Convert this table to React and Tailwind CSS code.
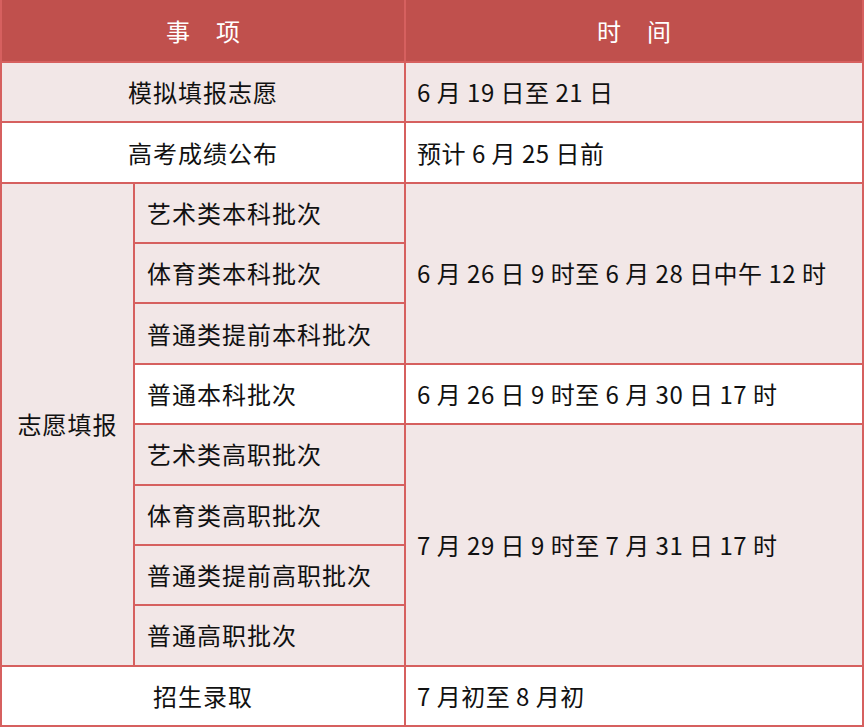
import React from "react";

const font = { fontFamily: '"Noto Sans CJK SC", "Noto Sans", sans-serif' };

function Cell({ className = "", children }) {
  return (
    <div className={"flex items-center text-[24px] leading-none tracking-[1px] text-[#111111] " + className}>
      {children}
    </div>
  );
}

function DateCell({ className = "", children }) {
  return (
    <div className={"flex items-center pl-[11px] text-[24px] leading-none tracking-[0.5px] text-[#111111] " + className}>
      {children}
    </div>
  );
}

export default function App() {
  const pink = "bg-[#f2e7e7]";
  const white = "bg-white";
  return (
    <div className="w-[864px] h-[727px] bg-white" style={font}>
      <div className="grid h-[727px] w-[864px] grid-cols-[131px_269px_1fr] grid-rows-[61px_repeat(11,minmax(0,1fr))] gap-[2px] bg-[#d6605f] px-[2px] pb-[2px]">
        {/* header */}
        <div className="col-span-2 flex items-center justify-center gap-[26px] bg-[#c0504d] text-[24px] leading-none text-white">
          <span>事</span>
          <span>项</span>
        </div>
        <div className="flex items-center justify-center gap-[26px] bg-[#c0504d] text-[24px] leading-none text-white">
          <span>时</span>
          <span>间</span>
        </div>

        {/* row 1 */}
        <Cell className={"col-span-2 justify-center " + pink}>模拟填报志愿</Cell>
        <DateCell className={pink}>6 月 19 日至 21 日</DateCell>

        {/* row 2 */}
        <Cell className={"col-span-2 justify-center " + white}>高考成绩公布</Cell>
        <DateCell className={white}>预计 6 月 25 日前</DateCell>

        {/* 志愿填报 block */}
        <Cell className={"row-span-8 justify-center " + pink}>志愿填报</Cell>
        <Cell className={"pl-[12px] " + pink}>艺术类本科批次</Cell>
        <DateCell className={"row-span-3 " + pink}>6 月 26 日 9 时至 6 月 28 日中午 12 时</DateCell>
        <Cell className={"pl-[12px] " + pink}>体育类本科批次</Cell>
        <Cell className={"pl-[12px] " + pink}>普通类提前本科批次</Cell>
        <Cell className={"pl-[12px] " + white}>普通本科批次</Cell>
        <DateCell className={white}>6 月 26 日 9 时至 6 月 30 日 17 时</DateCell>
        <Cell className={"pl-[12px] " + pink}>艺术类高职批次</Cell>
        <DateCell className={"row-span-4 " + pink}>7 月 29 日 9 时至 7 月 31 日 17 时</DateCell>
        <Cell className={"pl-[12px] " + pink}>体育类高职批次</Cell>
        <Cell className={"pl-[12px] " + pink}>普通类提前高职批次</Cell>
        <Cell className={"pl-[12px] " + pink}>普通高职批次</Cell>

        {/* last row */}
        <Cell className={"col-span-2 justify-center " + white}>招生录取</Cell>
        <DateCell className={white}>7 月初至 8 月初</DateCell>
      </div>
    </div>
  );
}
